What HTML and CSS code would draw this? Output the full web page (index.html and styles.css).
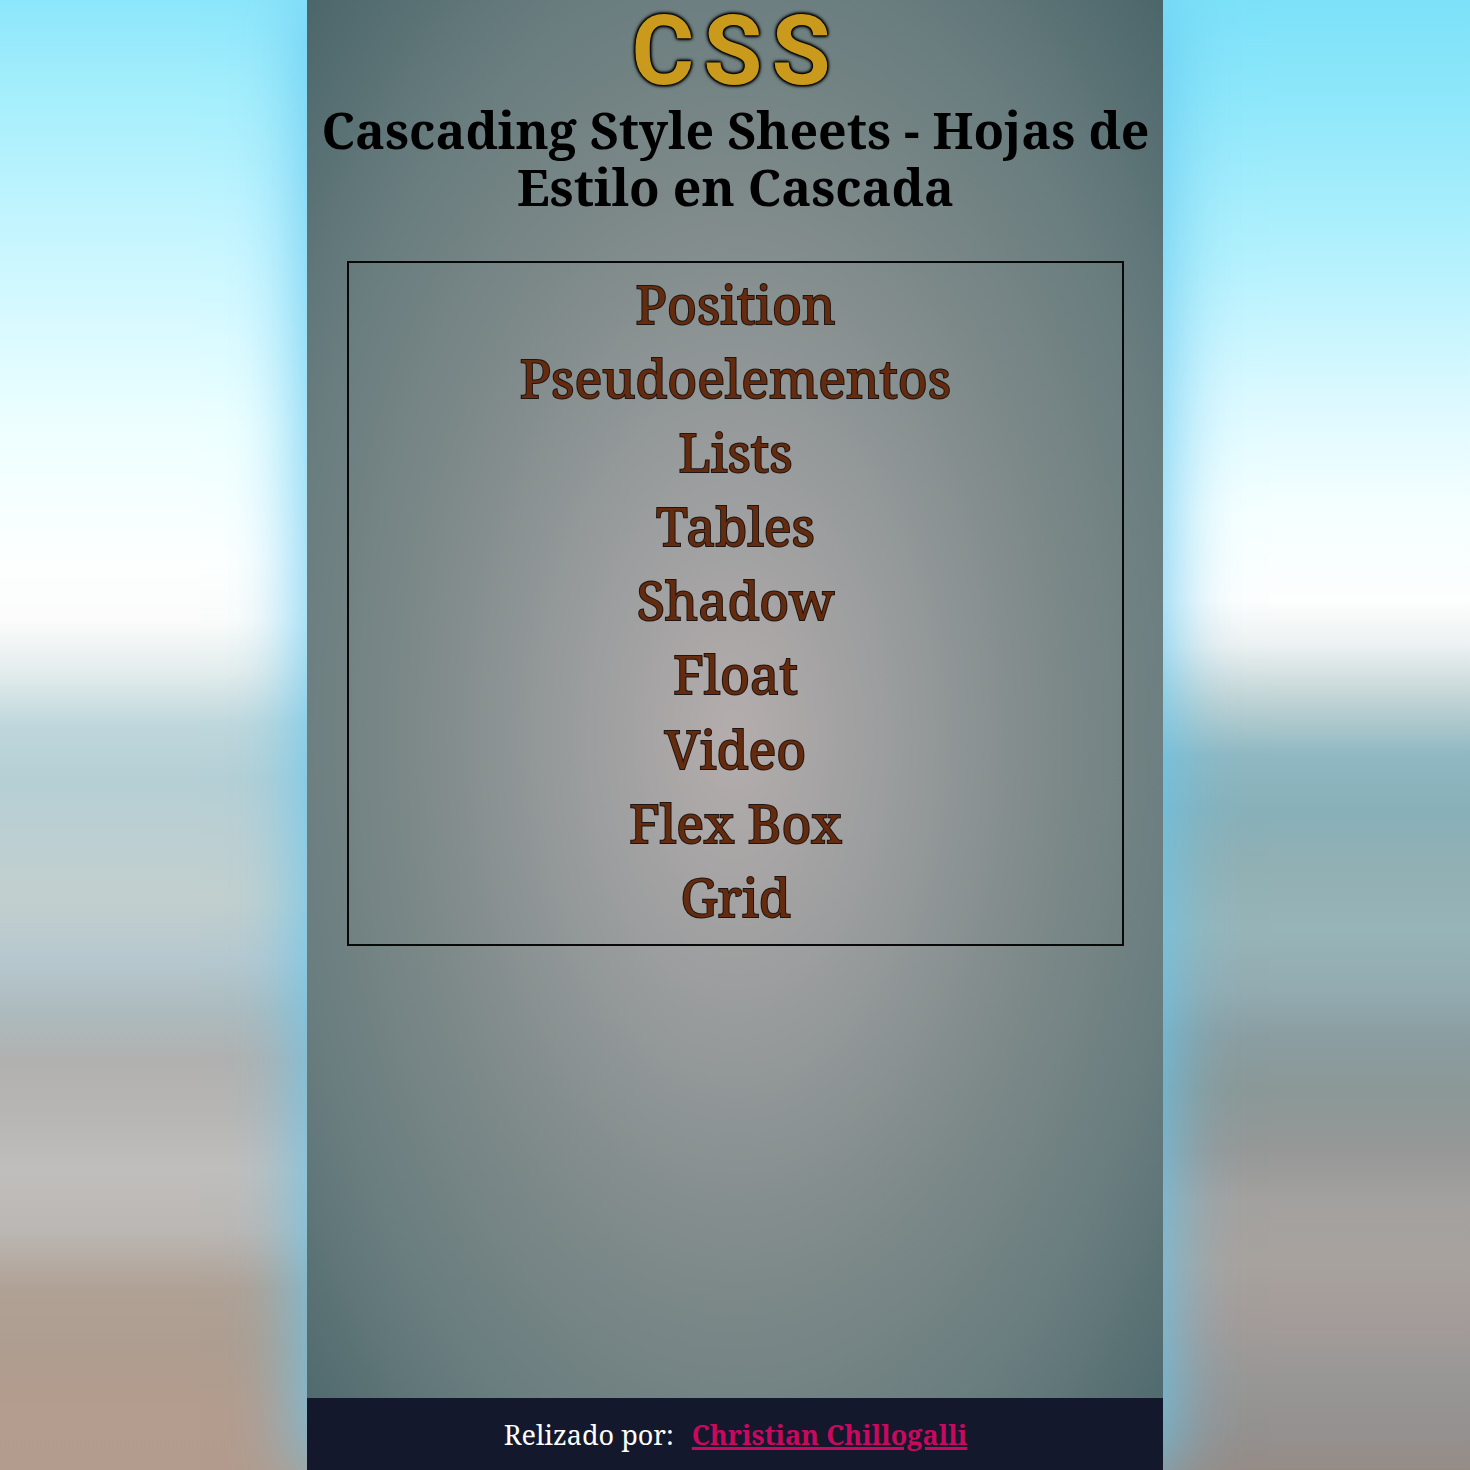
FILE: index.html
```
<!DOCTYPE html>
<html lang="es">
<head>
<meta charset="utf-8">
<title>CSS</title>
<link rel="stylesheet" href="styles.css">
</head>
<body>
<div class="page">
  <header class="header">
    <h1 class="title">CSS</h1>
    <h2 class="subtitle">Cascading Style Sheets - Hojas de Estilo en Cascada</h2>
  </header>
  <nav class="menu">
    <a class="menu-item">Position</a>
    <a class="menu-item">Pseudoelementos</a>
    <a class="menu-item">Lists</a>
    <a class="menu-item">Tables</a>
    <a class="menu-item">Shadow</a>
    <a class="menu-item">Float</a>
    <a class="menu-item">Video</a>
    <a class="menu-item">Flex Box</a>
    <a class="menu-item">Grid</a>
  </nav>
  <footer class="footer"><span class="credit">Relizado por:</span><a class="author">Christian Chillogalli</a></footer>
</div>
</body>
</html>
```
FILE: styles.css
```
* { box-sizing: border-box; }
body {
  margin: 0;
  height: 1470px;
  overflow: hidden;
  font-family: "Noto Serif", "DejaVu Serif Condensed", "DejaVu Serif", serif;
  background:
    linear-gradient(#8ce6fb 0, #a4eefc 90px, #c9f6ff 250px, #eeffff 430px, #fdffff 560px, #fbfcfb 620px, #e5eded 670px, #bfd7dc 725px, #b5cfd5 780px, #bdcfd2 840px, #c2cfce 900px, #b6c8cf 960px, #adbbbe 1010px, #b1b1b0 1060px, #b7b5b4 1110px, #c0bebc 1170px, #bbb7b4 1230px, #b0a195 1290px, #ae9d90 1350px, #b49c8e 1410px, #b39b8d 1470px) left / 50% 100% no-repeat,
    linear-gradient(#7ce1f9 0, #8ee7fa 100px, #b4f1fd 260px, #dcf9ff 400px, #f5ffff 510px, #fdfefe 600px, #edf1f1 645px, #c0d3d5 700px, #90b8c2 755px, #88b0b9 810px, #91b0b4 865px, #97b4b8 930px, #93abb1 990px, #8b9ea2 1035px, #8b9897 1090px, #969897 1150px, #a3a19f 1200px, #a8a29e 1265px, #a39b99 1325px, #989796 1380px, #949190 1430px, #968c87 1470px) right / 50% 100% no-repeat;
}
.page {
  width: 856px;
  height: 1470px;
  margin: 0 auto;
  display: flex;
  flex-direction: column;
  background: radial-gradient(ellipse farthest-corner at center, #b5adad 0%, #999c9d 27%, #7f8a8a 51%, #687c7e 76%, #4b666a 100%);
  box-shadow: 0 0 70px 3px #64c8f0;
}
.header { height: 261px; padding-left: 1px; text-align: center; }
.title {
  margin: 0;
  height: 102px;
  line-height: 102px;
  font-family: Roboto, sans-serif;
  font-size: 96px;
  letter-spacing: 9px;
  color: #c99a1c;
  text-shadow: 0 0 4px #000, 0 0 4px #000, 0 0 3px #000, 0 0 3px #000, 0 0 2px #000, 0 0 2px #000;
}
.subtitle { margin: 0; font-size: 50px; line-height: 57px; color: #000; }
.menu {
  width: 777px;
  height: 685px;
  margin-left: 40px;
  padding-top: 4px;
  border: 2px solid #080808;
  display: flex;
  flex-direction: column;
  align-items: center;
}
.menu-item {
  height: 74.1px;
  line-height: 74.1px;
  font-size: 52px;
  color: #642b0e;
  -webkit-text-stroke: 2px #1c1514;
  paint-order: stroke fill;
}
.footer {
  height: 72px;
  margin-top: auto;
  padding-left: 1px;
  display: flex;
  justify-content: center;
  align-items: center;
  gap: 18px;
  background: #14182c;
  font-size: 27px;
  color: #fff;
}
.author {
  color: #c8095f;
  font-weight: 700;
  text-decoration: underline;
  text-decoration-thickness: 3px;
}
```
